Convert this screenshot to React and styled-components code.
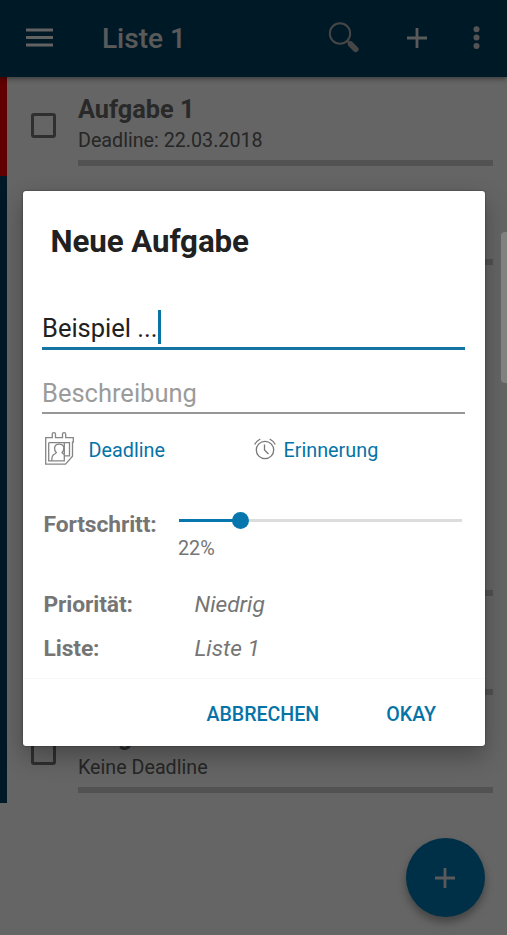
import React from "react";
import styled, { createGlobalStyle } from "styled-components";

const Global = createGlobalStyle`
  * { box-sizing: border-box; }
  body { margin: 0; background: #fff; font-family: Roboto, "Liberation Sans", sans-serif; }
`;

const Screen = styled.div`
  position: relative;
  height: 935px;
  overflow: hidden;
  background: #fcfcfc;
`;

const AppBar = styled.header`
  display: flex;
  align-items: center;
  height: 77px;
  padding: 0 27px 2px 26px;
  background: #004063;
  color: #fff;
  position: relative;
  box-shadow: 0 2px 5px rgba(0, 0, 0, 0.4);
`;

const BarTitle = styled.h1`
  flex: 1;
  margin: 3px 0 0 49px;
  font-size: 28px;
  line-height: 34px;
  font-weight: 500;
  color: #e0e0e0;
`;

const BarActions = styled.div`
  display: flex;
  align-items: center;
`;

const Icon = styled.svg`
  display: block;
  flex: none;
  fill: none;
  margin-left: ${(p) => p.$gap || 0}px;
`;

const List = styled.main`
  display: flex;
  flex-direction: column;
`;

const Task = styled.article`
  display: flex;
  height: 98.5px;
  padding: 0 14px 0 24px;
  border-left: 7px solid ${(p) => (p.$urgent ? "#f00000" : "#004063")};
`;

const TaskGroupGap = styled.div`
  height: 233px;
  border-left: 7px solid #004063;
`;

const Checkbox = styled.span`
  width: 25px;
  height: 25px;
  margin: 36px 22px 0 0;
  border: 3px solid #767676;
  border-radius: 3px;
`;

const TaskBody = styled.div`
  display: flex;
  flex-direction: column;
  justify-content: flex-end;
  flex: 1;
  height: 89px;
  color: #606060;
`;

const TaskName = styled.h2`
  margin: 0;
  font-size: 25.3px;
  line-height: 30px;
  font-weight: 700;
  color: #686868;
`;

const TaskDeadline = styled.p`
  margin: 4px 0 7px;
  font-size: 19.7px;
  line-height: 24px;
  color: #606060;
`;

const TaskProgress = styled.div`
  height: 6px;
  background: #cecece;
`;

const AddButton = styled.button`
  position: absolute;
  right: 22px;
  bottom: 18px;
  display: grid;
  place-items: center;
  width: 79px;
  height: 79px;
  padding: 0 1px 0 0;
  border: 0;
  border-radius: 50%;
  background: #0077b3;
  box-shadow: 0 5px 9px rgba(0, 0, 0, 0.35);
`;

const ScrollHandle = styled.div`
  position: absolute;
  right: -4px;
  top: 232px;
  width: 10px;
  height: 151px;
  border-radius: 4px;
  background: #818181;
`;

const Scrim = styled.div`
  position: absolute;
  inset: 0;
  display: flex;
  justify-content: center;
  align-items: flex-start;
  padding-top: 191px;
  background: rgba(0, 0, 0, 0.6);
`;

const Dialog = styled.section`
  display: flex;
  flex-direction: column;
  width: 462px;
  height: 555px;
  border-radius: 3px;
  background: #fff;
  box-shadow: 0 10px 24px rgba(0, 0, 0, 0.3), 0 0 2px rgba(0, 0, 0, 0.5);
`;

const DialogTitle = styled.h2`
  flex: none;
  margin: 0;
  padding: 32px 28px 0;
  height: 102px;
  font-size: 31.3px;
  line-height: 37px;
  font-weight: 700;
  letter-spacing: -0.1px;
  color: #212121;
`;

const Field = styled.div`
  flex: none;
  display: flex;
  align-items: center;
  height: ${(p) => (p.$active ? 57 : 55)}px;
  margin: ${(p) => (p.$active ? "0 20px 11px 19px" : "-2px 20px 0 19px")};
  padding-top: 15px;
  padding-left: 0.5px;
  border-bottom: ${(p) => (p.$active ? "3px solid #1674a3" : "2px solid #979797")};
  font-size: 25.5px;
  line-height: 30px;
  color: ${(p) => (p.$active ? "#212121" : "#9b9b9b")};
`;

const Caret = styled.span`
  width: 3px;
  height: 34px;
  margin-top: -2px;
  background: #0a73a5;
`;

const DateRow = styled.div`
  flex: none;
  display: grid;
  grid-template-columns: 209px 1fr;
  height: 67px;
  padding: 0 22px;
`;

const DateLink = styled.a`
  display: flex;
  align-items: center;
  height: 70px;
  font-size: 19.8px;
  line-height: 24px;
  color: #0673a7;
`;

const LinkText = styled.span`
  margin: 4px 0 0 ${(p) => p.$gap}px;
`;

const ProgressRow = styled.div`
  flex: none;
  display: grid;
  grid-template-columns: 135px 283px;
  height: 110px;
  padding: 30px 0 0 21px;
`;

const Label = styled.span`
  font-size: 22.8px;
  line-height: 28px;
  font-weight: 700;
  letter-spacing: -0.1px;
  color: #757575;
`;

const Slider = styled.div`
  display: flex;
  align-items: center;
  height: 19px;
`;

const SliderTrack = styled.span`
  flex: ${(p) => p.$share};
  height: 3px;
  background: ${(p) => (p.$filled ? "#0676ad" : "#dcdcdc")};
`;

const SliderThumb = styled.span`
  width: 17px;
  height: 17px;
  margin: 0 -8.5px;
  border-radius: 50%;
  background: #0676ad;
  z-index: 1;
`;

const Percent = styled.div`
  margin: 7px 0 0 -0.5px;
  font-size: 19.8px;
  line-height: 24px;
  color: #757575;
`;

const DetailRow = styled.div`
  display: grid;
  grid-template-columns: 151px 1fr;
  flex: 0 1 44.5px;
  padding-left: 21px;
`;

const DetailValue = styled.span`
  font-size: 22.7px;
  line-height: 28px;
  font-style: italic;
  color: #757575;
`;

const Actions = styled.footer`
  flex: none;
  display: flex;
  justify-content: flex-end;
  gap: 67px;
  margin-top: auto;
  height: 68px;
  padding: 24px 48.5px 0 0;
  border-top: 1px solid #f7f7f7;
`;

const Action = styled.button`
  height: 24px;
  padding: 0;
  border: 0;
  background: none;
  font: 500 19.6px/24px Roboto, sans-serif;
  color: #0673a7;
`;

const PlusIcon = ({ gap }) => (
  <Icon $gap={gap} width="20" height="20" viewBox="0 0 20 20">
    <path d="M10 0v20M0 10h20" stroke="#e0e0e0" strokeWidth="2.8" />
  </Icon>
);

const MenuIcon = () => (
  <Icon width="27" height="20" viewBox="0 0 27 20">
    <path d="M0 2h27M0 9.500h27M0 17h27" stroke="#f4f4f4" strokeWidth="2.8" />
  </Icon>
);

const SearchIcon = () => (
  <Icon width="32" height="32" viewBox="0 0 32 32">
    <circle cx="12" cy="11.5" r="10.2" stroke="#b0b0b0" strokeWidth="1.9" />
    <path d="M19.2 18.7l3 3" stroke="#b0b0b0" strokeWidth="2.500" />
    <path d="M22.7 22.2l5 5" stroke="#b0b0b0" strokeWidth="5.800" strokeLinecap="round" />
  </Icon>
);

const MoreIcon = () => (
  <Icon $gap={46} width="7" height="24" viewBox="0 0 7 24">
    <g fill="#d2d2d2">
      <circle cx="3.5" cy="3.2" r="3" />
      <circle cx="3.5" cy="11.6" r="3" />
      <circle cx="3.5" cy="20" r="3" />
    </g>
  </Icon>
);

const CalendarIcon = () => (
  <Icon width="29" height="34" viewBox="0 0 29 34" stroke="#858585" strokeWidth="1.3">
    <path d="M.7 5.700H7.300V2.200Q7.300.7 8.900.7t1.600 1.500v3.500h7V2.200q0-1.500 1.600-1.500t1.600 1.500v3.500h7.600v4.500h-.8v14l-7 8H.7v-22z" />
    <path d="M3.700 10.700h20.800v13.200h-5.200M3.700 10.700v18.200h15.600V10.700" />
    <path d="M6.800 28.700q0-5 1.800-6 2-1 2.800-2-2.200-2-1.800-5 .5-3.500 4.600-3.500t4.600 3.500q.3 3-1.800 5 .8 1 2 1.700" />
  </Icon>
);

const AlarmIcon = () => (
  <Icon width="22" height="22" viewBox="0 0 22 22" stroke="#777" strokeWidth="1.3">
    <circle cx="11" cy="12" r="8.7" />
    <path d="M10.500 6.500v5.500l4 4M.7 6.500Q2.500 3 6.300 1M21.300 6.500Q19.500 3 15.700 1" />
  </Icon>
);

const TaskItem = ({ name, deadline, urgent }) => (
  <Task $urgent={urgent}>
    <Checkbox />
    <TaskBody>
      {name && <TaskName>{name}</TaskName>}
      {deadline && <TaskDeadline>{deadline}</TaskDeadline>}
      <TaskProgress />
    </TaskBody>
  </Task>
);

export default function App() {
  return (
    <>
      <Global />
      <Screen>
        <AppBar>
          <MenuIcon />
          <BarTitle>Liste 1</BarTitle>
          <BarActions>
            <SearchIcon />
            <PlusIcon gap={47} />
            <MoreIcon />
          </BarActions>
        </AppBar>
        <List>
          <TaskItem name="Aufgabe 1" deadline="Deadline: 22.03.2018" urgent />
          <TaskItem />
          <TaskGroupGap />
          <TaskItem />
          <TaskItem />
          <TaskItem name="Aufgabe 7" deadline="Keine Deadline" />
        </List>
        <AddButton aria-label="Aufgabe anlegen">
          <PlusIcon />
        </AddButton>
        <Scrim>
          <Dialog>
            <DialogTitle>Neue Aufgabe</DialogTitle>
            <Field $active>
              Beispiel ...
              <Caret />
            </Field>
            <Field>Beschreibung</Field>
            <DateRow>
              <DateLink>
                <CalendarIcon />
                <LinkText $gap={15}>Deadline</LinkText>
              </DateLink>
              <DateLink>
                <AlarmIcon />
                <LinkText $gap={8}>Erinnerung</LinkText>
              </DateLink>
            </DateRow>
            <ProgressRow>
              <Label>Fortschritt:</Label>
              <div>
                <Slider>
                  <SliderTrack $share={22} $filled />
                  <SliderThumb />
                  <SliderTrack $share={78} />
                </Slider>
                <Percent>22%</Percent>
              </div>
            </ProgressRow>
            <DetailRow>
              <Label>Priorität:</Label>
              <DetailValue>Niedrig</DetailValue>
            </DetailRow>
            <DetailRow>
              <Label>Liste:</Label>
              <DetailValue>Liste 1</DetailValue>
            </DetailRow>
            <Actions>
              <Action>ABBRECHEN</Action>
              <Action>OKAY</Action>
            </Actions>
          </Dialog>
        </Scrim>
        <ScrollHandle />
      </Screen>
    </>
  );
}
